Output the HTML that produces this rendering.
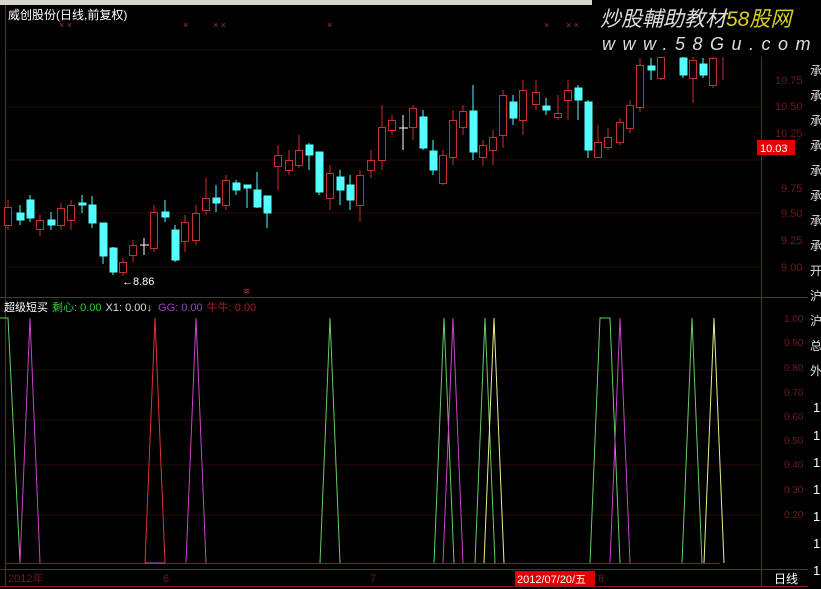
<!DOCTYPE html>
<html><head><meta charset="utf-8"><style>
html,body{margin:0;padding:0;background:#000;width:821px;height:589px;overflow:hidden}
svg{display:block}
text{font-family:"Liberation Sans","Noto Sans CJK SC",sans-serif}
</style></head><body>
<svg width="821" height="589" viewBox="0 0 821 589" xmlns="http://www.w3.org/2000/svg">
<rect width="821" height="589" fill="#000"/>
<rect x="0" y="0" width="592" height="5" fill="#d8d4cc"/>
<g stroke="#2a0a0a" stroke-width="1">
<line x1="6" y1="50" x2="760" y2="50"/><line x1="6" y1="107" x2="760" y2="107"/>
<line x1="6" y1="160" x2="760" y2="160"/><line x1="6" y1="213" x2="760" y2="213"/>
<line x1="6" y1="267" x2="760" y2="267"/>
<line x1="6" y1="370" x2="760" y2="370"/><line x1="6" y1="420" x2="760" y2="420"/>
<line x1="6" y1="465" x2="760" y2="465"/><line x1="6" y1="515" x2="760" y2="515"/>
</g>
<g stroke="#8a1a2a" stroke-width="1" fill="none">
<line x1="0" y1="297.5" x2="808" y2="297.5"/>
<line x1="761.5" y1="5" x2="761.5" y2="586"/>
<line x1="6" y1="563.5" x2="720" y2="563.5"/>
<line x1="0" y1="569.5" x2="808" y2="569.5"/>
<line x1="0" y1="586.5" x2="808" y2="586.5"/>
<line x1="5.5" y1="5" x2="5.5" y2="586"/>
</g>
<text x="8" y="19" fill="#fff" font-size="12">威创股份(日线,前复权)</text>
<g fill="#a0306a" font-size="9"><text x="59" y="28">× ×</text><text x="183" y="28">×</text><text x="213" y="28">× ×</text><text x="327" y="28">×</text><text x="544" y="28">×</text><text x="566" y="28">× ×</text></g>
<g stroke="#c83030" fill="#000" stroke-width="1">
<line x1="8" y1="200" x2="8" y2="230"/><rect x="4.5" y="207.5" width="7" height="18"/>
<line x1="40" y1="215" x2="40" y2="236"/><rect x="36.5" y="220.5" width="7" height="9"/>
<line x1="61" y1="203" x2="61" y2="230"/><rect x="57.5" y="208.5" width="7" height="17"/>
<line x1="71" y1="200" x2="71" y2="230"/><rect x="67.5" y="205.5" width="7" height="15"/>
<line x1="123" y1="258" x2="123" y2="276"/><rect x="119.5" y="262.5" width="7" height="10"/>
<line x1="133" y1="240" x2="133" y2="262"/><rect x="129.5" y="245.5" width="7" height="10"/>
<line x1="154" y1="205" x2="154" y2="252"/><rect x="150.5" y="212.5" width="7" height="36"/>
<line x1="185" y1="215" x2="185" y2="252"/><rect x="181.5" y="222.5" width="7" height="19"/>
<line x1="196" y1="205" x2="196" y2="245"/><rect x="192.5" y="213.5" width="7" height="27"/>
<line x1="206" y1="178" x2="206" y2="215"/><rect x="202.5" y="198.5" width="7" height="12"/>
<line x1="226" y1="175" x2="226" y2="210"/><rect x="222.5" y="180.5" width="7" height="25"/>
<line x1="278" y1="145" x2="278" y2="190"/><rect x="274.5" y="155.5" width="7" height="11"/>
<line x1="289" y1="150" x2="289" y2="175"/><rect x="285.5" y="160.5" width="7" height="10"/>
<line x1="299" y1="135" x2="299" y2="168"/><rect x="295.5" y="150.5" width="7" height="15"/>
<line x1="330" y1="165" x2="330" y2="210"/><rect x="326.5" y="173.5" width="7" height="25"/>
<line x1="360" y1="170" x2="360" y2="222"/><rect x="356.5" y="175.5" width="7" height="30"/>
<line x1="371" y1="150" x2="371" y2="178"/><rect x="367.5" y="160.5" width="7" height="10"/>
<line x1="382" y1="105" x2="382" y2="170"/><rect x="378.5" y="127.5" width="7" height="33"/>
<line x1="392" y1="115" x2="392" y2="135"/><rect x="388.5" y="120.5" width="7" height="10"/>
<line x1="413" y1="105" x2="413" y2="140"/><rect x="409.5" y="108.5" width="7" height="19"/>
<line x1="443" y1="150" x2="443" y2="185"/><rect x="439.5" y="155.5" width="7" height="28"/>
<line x1="453" y1="110" x2="453" y2="165"/><rect x="449.5" y="120.5" width="7" height="37"/>
<line x1="463" y1="105" x2="463" y2="135"/><rect x="459.5" y="111.5" width="7" height="16"/>
<line x1="483" y1="140" x2="483" y2="166"/><rect x="479.5" y="145.5" width="7" height="12"/>
<line x1="493" y1="130" x2="493" y2="165"/><rect x="489.5" y="137.5" width="7" height="13"/>
<line x1="503" y1="90" x2="503" y2="148"/><rect x="499.5" y="95.5" width="7" height="40"/>
<line x1="523" y1="80" x2="523" y2="135"/><rect x="519.5" y="90.5" width="7" height="30"/>
<line x1="536" y1="80" x2="536" y2="110"/><rect x="532.5" y="92.5" width="7" height="12"/>
<line x1="558" y1="95" x2="558" y2="120"/><rect x="554.5" y="113.5" width="7" height="4"/>
<line x1="568" y1="80" x2="568" y2="120"/><rect x="564.5" y="90.5" width="7" height="10"/>
<line x1="598" y1="125" x2="598" y2="158"/><rect x="594.5" y="142.5" width="7" height="15"/>
<line x1="608" y1="128" x2="608" y2="150"/><rect x="604.5" y="137.5" width="7" height="10"/>
<line x1="620" y1="118" x2="620" y2="145"/><rect x="616.5" y="122.5" width="7" height="20"/>
<line x1="630" y1="100" x2="630" y2="133"/><rect x="626.5" y="105.5" width="7" height="23"/>
<line x1="640" y1="58" x2="640" y2="112"/><rect x="636.5" y="65.5" width="7" height="42"/>
<line x1="661" y1="55" x2="661" y2="80"/><rect x="657.5" y="57.5" width="7" height="21"/>
<line x1="693" y1="55" x2="693" y2="103"/><rect x="689.5" y="60.5" width="7" height="18"/>
<line x1="713" y1="55" x2="713" y2="88"/><rect x="709.5" y="58.5" width="7" height="27"/>
<line x1="723" y1="55" x2="723" y2="80"/>
</g>
<g stroke="#5ff" fill="#5ff" stroke-width="1">
<line x1="20" y1="205" x2="20" y2="225"/><rect x="17" y="213" width="7" height="7"/>
<line x1="30" y1="195" x2="30" y2="222"/><rect x="27" y="200" width="7" height="18"/>
<line x1="51" y1="212" x2="51" y2="230"/><rect x="48" y="220" width="7" height="5"/>
<line x1="82" y1="195" x2="82" y2="213"/><rect x="79" y="203" width="7" height="2"/>
<line x1="92" y1="196" x2="92" y2="228"/><rect x="89" y="205" width="7" height="18"/>
<line x1="103" y1="223" x2="103" y2="264"/><rect x="100" y="223" width="7" height="33"/>
<line x1="113" y1="247" x2="113" y2="275"/><rect x="110" y="248" width="7" height="24"/>
<line x1="165" y1="200" x2="165" y2="222"/><rect x="162" y="212" width="7" height="5"/>
<line x1="175" y1="225" x2="175" y2="262"/><rect x="172" y="230" width="7" height="30"/>
<line x1="216" y1="185" x2="216" y2="212"/><rect x="213" y="198" width="7" height="5"/>
<line x1="236" y1="180" x2="236" y2="195"/><rect x="233" y="183" width="7" height="7"/>
<line x1="247" y1="185" x2="247" y2="208"/><rect x="244" y="185" width="7" height="3"/>
<line x1="257" y1="172" x2="257" y2="208"/><rect x="254" y="190" width="7" height="17"/>
<line x1="267" y1="196" x2="267" y2="228"/><rect x="264" y="196" width="7" height="17"/>
<line x1="309" y1="143" x2="309" y2="170"/><rect x="306" y="145" width="7" height="10"/>
<line x1="319" y1="152" x2="319" y2="195"/><rect x="316" y="152" width="7" height="40"/>
<line x1="340" y1="170" x2="340" y2="205"/><rect x="337" y="177" width="7" height="13"/>
<line x1="350" y1="175" x2="350" y2="210"/><rect x="347" y="185" width="7" height="15"/>
<line x1="423" y1="110" x2="423" y2="150"/><rect x="420" y="117" width="7" height="31"/>
<line x1="433" y1="140" x2="433" y2="175"/><rect x="430" y="151" width="7" height="19"/>
<line x1="473" y1="85" x2="473" y2="160"/><rect x="470" y="111" width="7" height="41"/>
<line x1="513" y1="95" x2="513" y2="125"/><rect x="510" y="102" width="7" height="16"/>
<line x1="546" y1="98" x2="546" y2="115"/><rect x="543" y="106" width="7" height="4"/>
<line x1="578" y1="85" x2="578" y2="120"/><rect x="575" y="88" width="7" height="12"/>
<line x1="588" y1="100" x2="588" y2="158"/><rect x="585" y="102" width="7" height="48"/>
<line x1="651" y1="58" x2="651" y2="80"/><rect x="648" y="66" width="7" height="4"/>
<line x1="683" y1="55" x2="683" y2="78"/><rect x="680" y="58" width="7" height="17"/>
<line x1="703" y1="58" x2="703" y2="78"/><rect x="700" y="64" width="7" height="11"/>
</g>
<g stroke="#fff"><line x1="144" y1="238" x2="144" y2="255"/><line x1="140" y1="245" x2="149" y2="245"/>
<line x1="403" y1="115" x2="403" y2="150"/><line x1="399" y1="128" x2="408" y2="128"/></g>
<text x="122" y="285" fill="#fff" font-size="11">←8.86</text>
<text x="243" y="294" fill="#c03030" font-size="9">≋</text>
<rect x="592" y="0" width="229" height="57" fill="#000"/>
<text x="600" y="26" fill="#ddd" font-size="21" font-style="italic" font-family="'Noto Sans CJK SC',sans-serif">炒股輔助教材<tspan fill="#d8d020">58股网</tspan></text>
<text x="602" y="50" fill="#ddd" font-size="18" font-style="italic" font-family="'Liberation Serif',serif" letter-spacing="7.5">www.58Gu.com</text>
<g fill="#701820" font-size="11"><text x="775" y="84">10.75</text><text x="775" y="110">10.50</text><text x="775" y="137">10.25</text><text x="781" y="192">9.75</text><text x="781" y="217">9.50</text><text x="781" y="244">9.25</text><text x="781" y="271">9.00</text></g>
<rect x="757" y="140" width="38" height="15" fill="#e80000"/>
<text x="760" y="152" fill="#fff" font-size="11">10.03</text>
<g fill="#ddd" font-size="12" font-family="'Noto Sans CJK SC',sans-serif"><text x="810" y="75">承</text><text x="810" y="100">承</text><text x="810" y="125">承</text><text x="810" y="150">承</text><text x="810" y="175">承</text><text x="810" y="200">承</text><text x="810" y="225">承</text><text x="810" y="250">承</text><text x="810" y="275">开</text><text x="810" y="300">沪</text><text x="810" y="325">沪</text><text x="810" y="350">总</text><text x="810" y="375">外</text></g>
<g fill="#fff" font-size="13"><text x="813" y="412">1</text><text x="813" y="440">1</text><text x="813" y="467">1</text><text x="813" y="494">1</text><text x="813" y="521">1</text><text x="813" y="548">1</text><text x="813" y="575">1</text></g>
<text x="4" y="311" font-size="11"><tspan fill="#fff">超级短买</tspan><tspan fill="#3c3" dx="4">剩心: 0.00</tspan><tspan fill="#ddd" dx="4">X1: 0.00↓</tspan><tspan fill="#a040c0" dx="6">GG: 0.00</tspan><tspan fill="#a02020" dx="4">牛牛: 0.00</tspan></text>
<g fill="#701820" font-size="10"><text x="784" y="322">1.00</text><text x="784" y="346">0.90</text><text x="784" y="371">0.80</text><text x="784" y="396">0.70</text><text x="784" y="420">0.60</text><text x="784" y="444">0.50</text><text x="784" y="468">0.40</text><text x="784" y="493">0.30</text><text x="784" y="518">0.20</text></g>
<g fill="none" stroke-width="1">
<polyline stroke="#6c6" points="-2,318 8,318 20,563"/>
<polyline stroke="#c4c" points="20,563 30,318 40,563"/>
<polyline stroke="#d33" points="145,563 155,318 165,563"/>
<polyline stroke="#c4c" points="145,563 165,563"/>
<polyline stroke="#c4c" points="186,563 196,318 206,563"/>
<polyline stroke="#6c6" points="320,563 330,318 340,563"/>
<polyline stroke="#6c6" points="434,563 444,318 454,563"/>
<polyline stroke="#c4c" points="443,563 453,318 463,563"/>
<polyline stroke="#6c6" points="475,563 485,318 495,563"/>
<polyline stroke="#ee8" points="484,563 494,318 504,563"/>
<polyline stroke="#6c6" points="590,563 600,318 610,318 620,563"/>
<polyline stroke="#c4c" points="610,563 620,318 630,563"/>
<polyline stroke="#6c6" points="682,563 692,318 702,563"/>
<polyline stroke="#ee8" points="704,563 714,318 724,563"/>
</g>
<g fill="#701820" font-size="11"><text x="8" y="582">2012年</text><text x="163" y="582">6</text><text x="370" y="582">7</text><text x="598" y="582">8</text></g>
<rect x="515" y="571" width="80" height="15" fill="#e00000"/>
<text x="517" y="583" fill="#fff" font-size="11">2012/07/20/五</text>
<text x="774" y="583" fill="#fff" font-size="12" font-family="'Noto Sans CJK SC',sans-serif">日线</text>
</svg>
</body></html>
